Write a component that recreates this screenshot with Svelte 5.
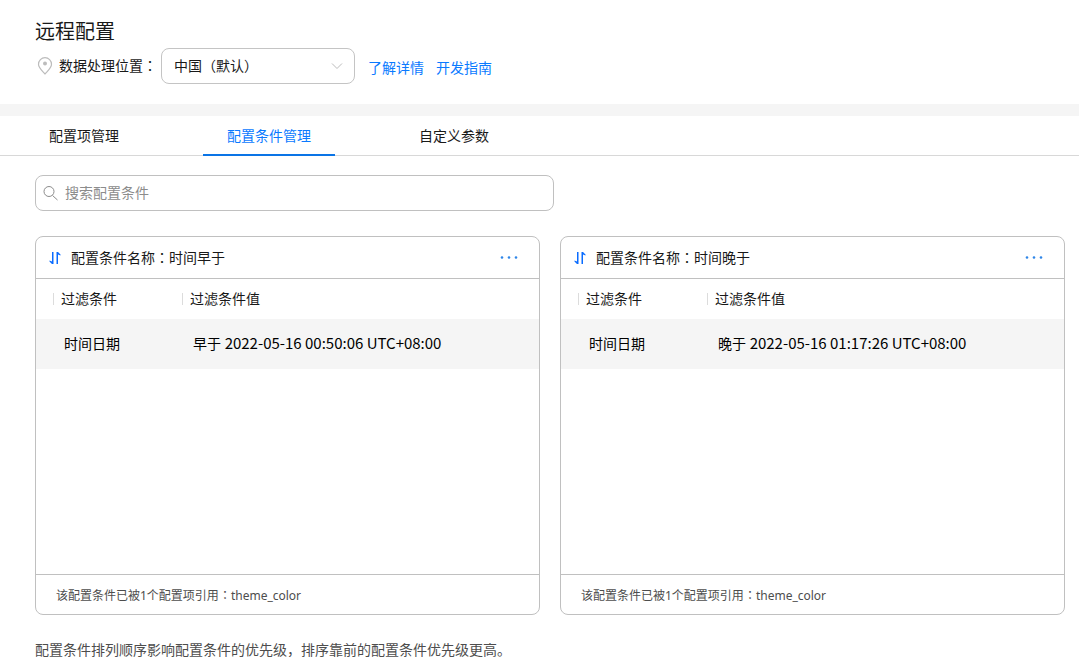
<script>
    let location = 'cn';
    let keyword = '';
    let activeTab = 'conditions';

    const tabs = [
        { value: 'items',      label: '配置项管理' },
        { value: 'conditions', label: '配置条件管理' },
        { value: 'params',     label: '自定义参数' },
    ];

    const conditions = [
        { name: '时间早于', filter: '时间日期', operator: '早于', time: '2022-05-16 00:50:06 UTC+08:00', usedBy: ['theme_color'] },
        { name: '时间晚于', filter: '时间日期', operator: '晚于', time: '2022-05-16 01:17:26 UTC+08:00', usedBy: ['theme_color'] },
    ];

    $: visible = conditions.filter(c => c.name.includes(keyword.trim()));
</script>

<div class="page">
    <header>
        <h1>远程配置</h1>
        <div class="location">
            <svg class="pin" width="16" height="18" viewBox="0 0 16 18" fill="none" stroke="#bcbcbc" stroke-width="1.2">
                <path d="M8 17C6 14.400 1.500 11 1.500 7.200a6.500 6.500 0 0 1 13 0C14.500 11 10 14.400 8 17z" />
                <circle cx="8" cy="6.500" r="2" fill="#bcbcbc" stroke="none" />
            </svg>
            <label for="location">数据处理位置<span class="colon">：</span></label>
            <div class="select">
                <select id="location" bind:value={location}>
                    <option value="cn">中国（默认）</option>
                </select>
                <svg class="arrow" width="12" height="8" viewBox="0 0 12 8" fill="none" stroke="#bcbcbc">
                    <path d="M1 1.500l5 5 5-5" />
                </svg>
            </div>
            <div class="links">
                <a href="#details">了解详情</a>
                <a href="#guide">开发指南</a>
            </div>
        </div>
    </header>

    <nav>
        {#each tabs as tab}
            <button class="tab" class:active={activeTab === tab.value} on:click={() => activeTab = tab.value}>
                {tab.label}
            </button>
        {/each}
    </nav>

    <main>
        <label class="search">
            <svg width="16" height="16" viewBox="0 0 16 16" fill="none" stroke="#8c8c8c">
                <circle cx="6" cy="6.500" r="5" />
                <path d="M9.500 10.500l5 4.500" />
            </svg>
            <input type="text" aria-label="搜索配置条件" placeholder="搜索配置条件" bind:value={keyword} />
        </label>

        <div class="cards">
            {#each visible as condition}
                <section class="card">
                    <div class="card-head">
                        <svg width="12" height="14" viewBox="0 0 12 14" fill="#0a6cff">
                            <path d="M3 1h1.500v12H3L0.500 10.500V9.500L3 10.500z" />
                            <path d="M9 13H7.500V1H9l2.500 2.500v1L9 3.500z" />
                        </svg>
                        <h2>配置条件名称<span class="colon">：</span>{condition.name}</h2>
                        <button class="more" aria-label="更多">
                            <svg width="18" height="4" viewBox="0 0 18 4" fill="#2f86e8">
                                <circle cx="2" cy="1.500" r="1.300" />
                                <circle cx="9" cy="1.500" r="1.300" />
                                <circle cx="16" cy="1.500" r="1.300" />
                            </svg>
                        </button>
                    </div>
                    <div class="card-body">
                        <table>
                            <thead>
                                <tr>
                                    <th>过滤条件</th>
                                    <th>过滤条件值</th>
                                </tr>
                            </thead>
                            <tbody>
                                <tr>
                                    <td>{condition.filter}</td>
                                    <td>{condition.operator} <time>{condition.time}</time></td>
                                </tr>
                            </tbody>
                        </table>
                    </div>
                    <div class="card-foot">
                        该配置条件已被{condition.usedBy.length}个配置项引用<span class="colon">：</span>{condition.usedBy.join(', ')}
                    </div>
                </section>
            {/each}
        </div>

        <p class="hint">配置条件排列顺序影响配置条件的优先级，排序靠前的配置条件优先级更高。</p>
    </main>
</div>

<style>
    :global(body) {
        background: #fff;
    }

    .page {
        color: #191919;
        font-family: "Noto Sans", "Noto Sans CJK SC", sans-serif;
        font-size: 14px;
        line-height: 20px;
    }

    .page * {
        box-sizing: border-box;
    }

    h1, h2, p {
        margin: 0;
        font-weight: 400;
    }

    button, input, select {
        font: inherit;
        color: inherit;
    }

    /* full-width colon sits in the middle of its cell */
    .colon {
        font-family: "Noto Sans CJK TC", sans-serif;
        line-height: 1;
    }

    header {
        padding: 16px 36px 20px 35px;
        border-bottom: 12px solid #f5f5f5;
    }

    h1 {
        font-size: 20px;
        line-height: 32px;
    }

    .location {
        display: flex;
        align-items: center;
    }

    .pin {
        margin: 0 6px 0 2px;
    }

    .select {
        position: relative;
        width: 194px;
        margin: 0 13px 0 4px;
    }

    select {
        display: block;
        width: 100%;
        height: 36px;
        padding: 0 32px 0 12px;
        border: 1px solid #c4c4c4;
        border-radius: 8px;
        background: #fff;
        appearance: none;
    }

    .arrow {
        position: absolute;
        top: 14px;
        right: 12px;
        pointer-events: none;
    }

    .links {
        display: flex;
        gap: 12px;
        padding-top: 4px;
    }

    a {
        color: #0a7aff;
        text-decoration: none;
    }

    nav {
        display: flex;
        gap: 60px;
        height: 40px;
        padding-left: 25px;
        border-bottom: 1px solid #d8d8d8;
    }

    .tab {
        height: 40px;
        padding: 2px 24px 0;
        border: none;
        border-bottom: 2px solid transparent;
        background: none;
        cursor: pointer;
    }

    .tab.active {
        color: #0a7aff;
        border-bottom-color: #0a74e6;
    }

    main {
        padding: 19px 14px 0 35px;
    }

    .search {
        display: flex;
        align-items: center;
        gap: 6px;
        max-width: 519px;
        height: 36px;
        padding: 0 7px;
        border: 1px solid #c0c0c0;
        border-radius: 8px;
    }

    input {
        flex: 1;
        padding: 0;
        border: none;
        outline: none;
        background: none;
    }

    input::placeholder {
        color: #8c8c8c;
        opacity: 1;
    }

    .cards {
        display: grid;
        grid-template-columns: 1fr 1fr;
        gap: 20px;
        margin-top: 25px;
    }

    .card {
        border: 1px solid #c0c0c0;
        border-radius: 8px;
    }

    .card-head {
        display: flex;
        align-items: center;
        height: 42px;
        padding: 0 21px 0 13px;
        border-bottom: 1px solid #c0c0c0;
    }

    h2 {
        flex: 1;
        padding-left: 10px;
        font-size: 14px;
    }

    .more {
        display: flex;
        padding: 8px 0;
        border: none;
        background: none;
        cursor: pointer;
    }

    .card-body {
        min-height: 295px;
    }

    table {
        width: 100%;
        border-collapse: collapse;
        text-align: left;
    }

    th {
        height: 40px;
        padding: 0 0 0 17px;
        font-weight: 400;
    }

    th:first-child {
        width: 129px;
    }

    th::before {
        content: '';
        display: inline-block;
        width: 1px;
        height: 12px;
        margin-right: 7px;
        background: #dcdcdc;
        vertical-align: -1px;
    }

    td {
        height: 50px;
        padding: 0 0 0 28px;
        background: #f5f5f5;
        color: #000;
    }

    time {
        font-family: "Noto Sans CJK SC", sans-serif;
        font-size: 15px;
        line-height: 1;
    }

    .card-foot {
        padding: 11px 20px 8px;
        border-top: 1px solid #c0c0c0;
        color: #4d4d4d;
        font-size: 12px;
    }

    .hint {
        margin-top: 25px;
        color: #4d4d4d;
    }
</style>
